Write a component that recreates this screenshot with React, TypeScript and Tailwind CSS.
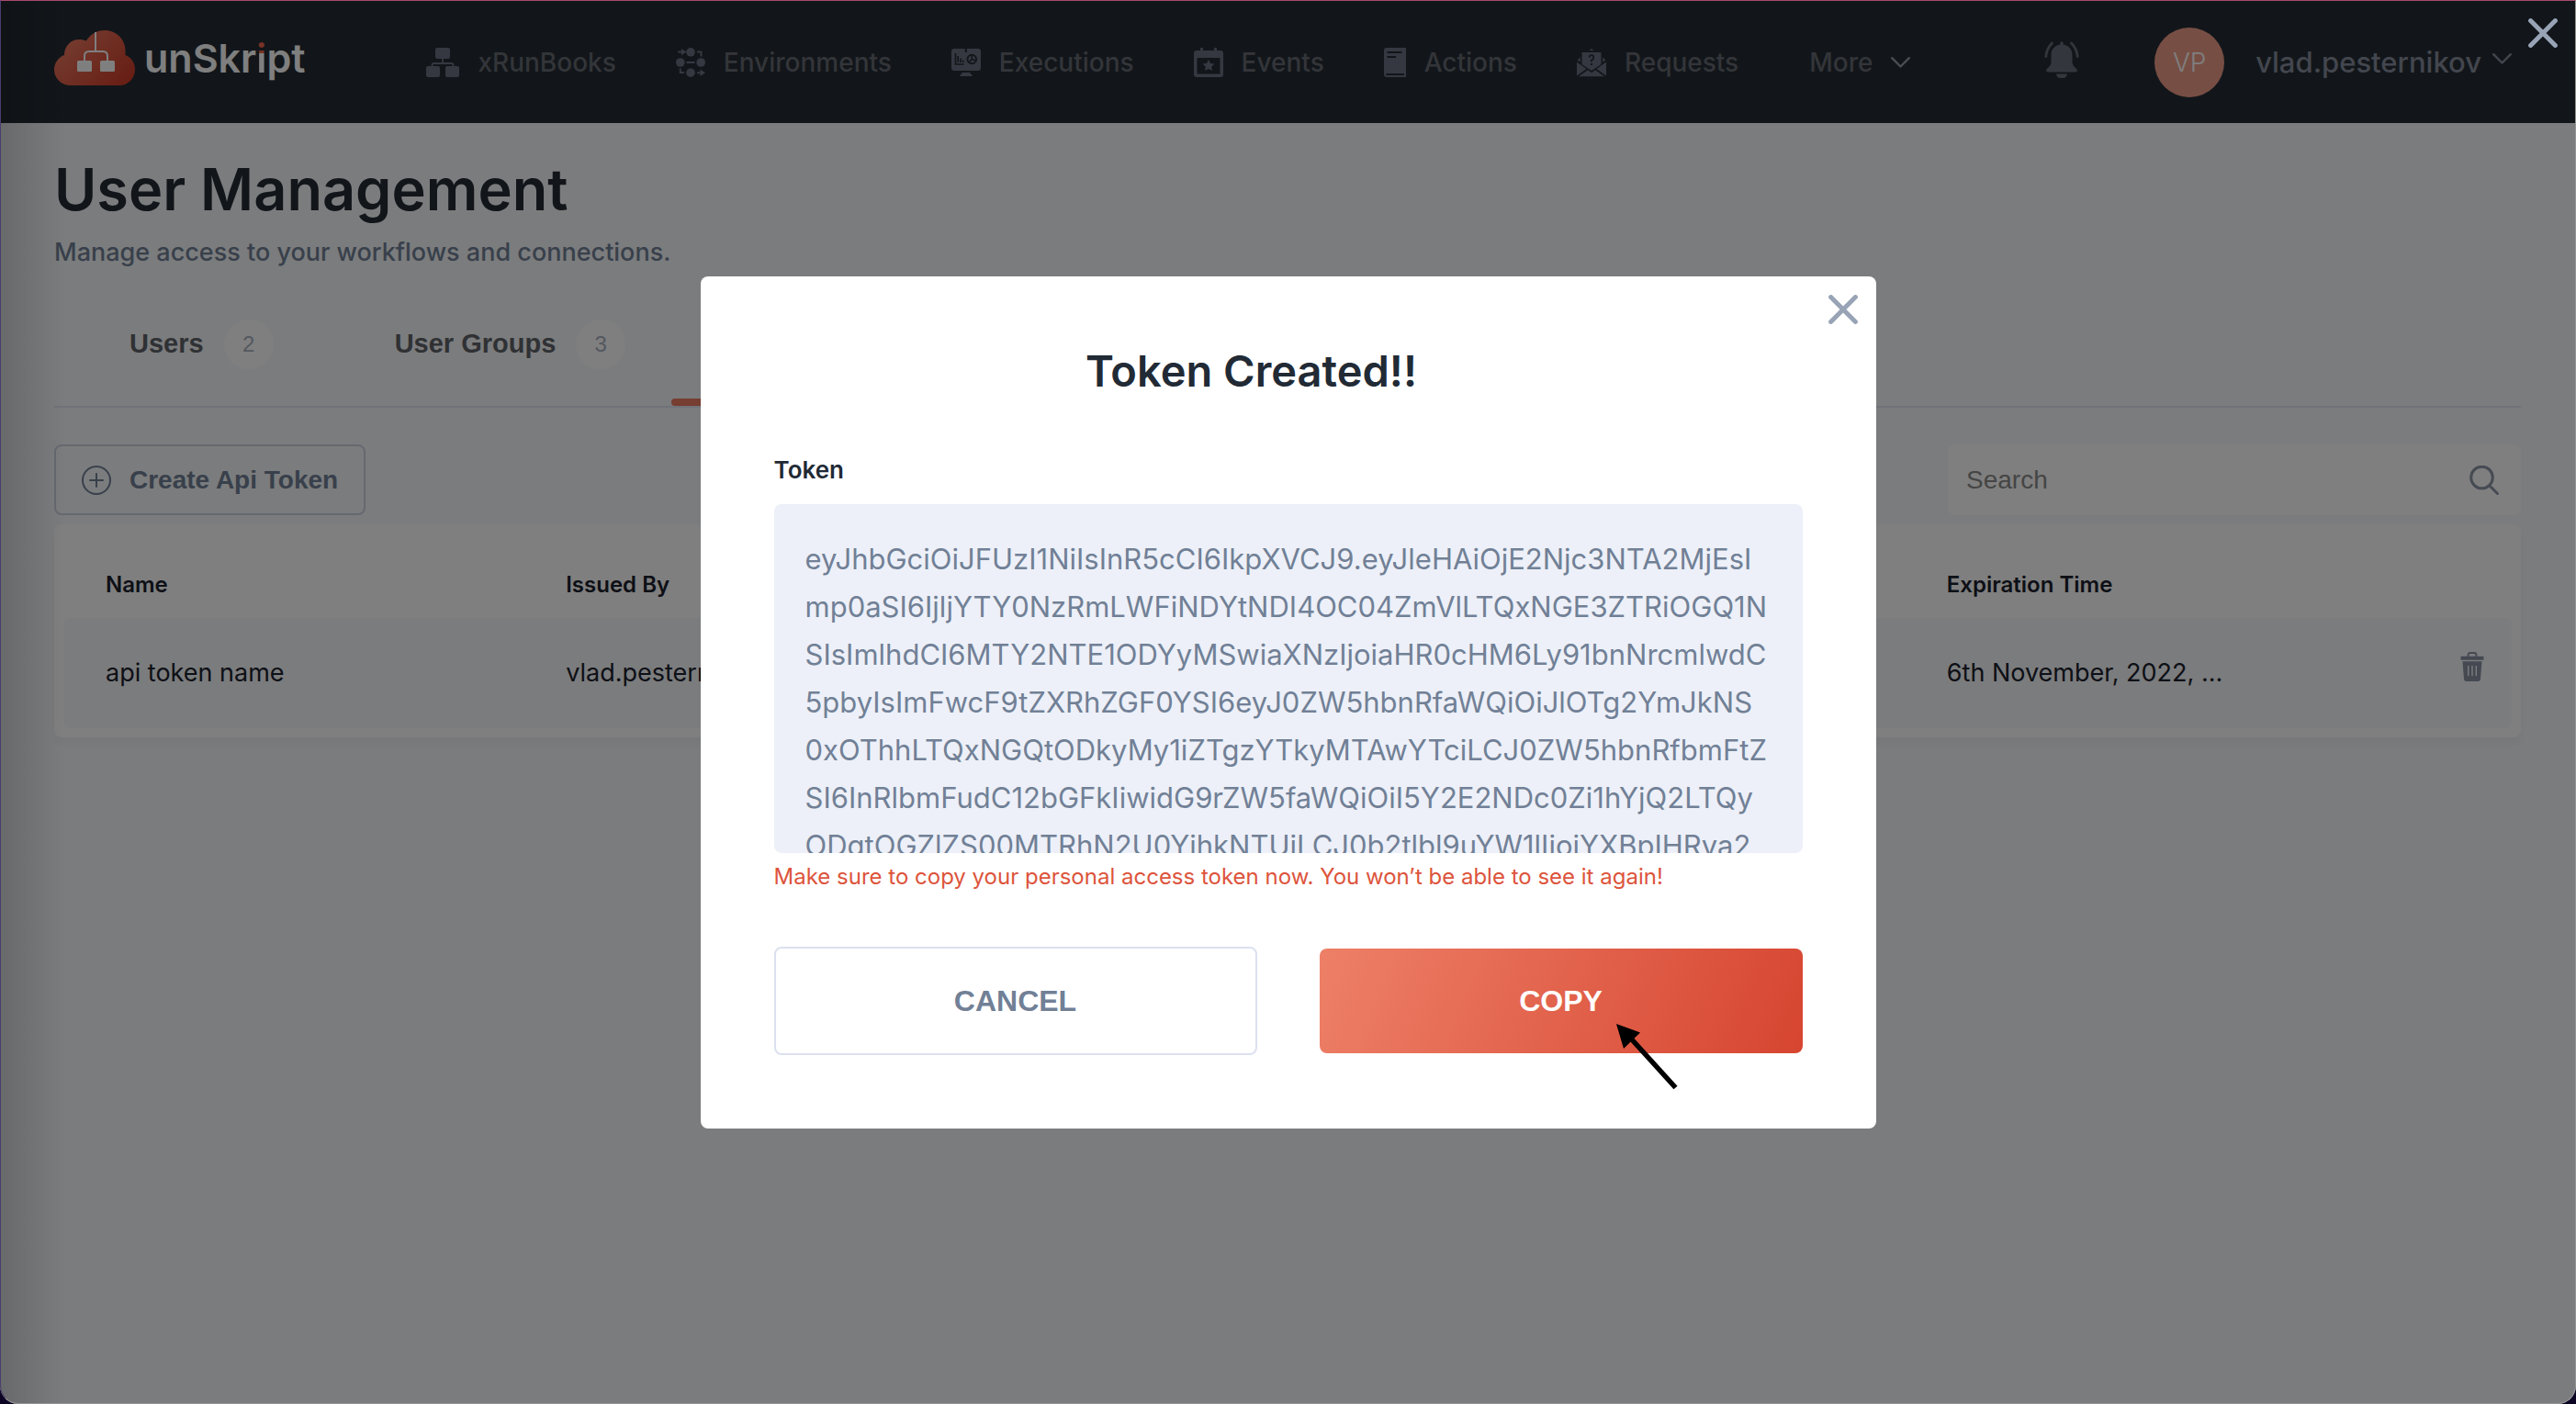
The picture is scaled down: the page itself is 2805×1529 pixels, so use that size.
import React, { useState } from 'react';

const TOKEN = [
  'eyJhbGciOiJFUzI1NiIsInR5cCI6IkpXVCJ9.eyJleHAiOjE2Njc3NTA2MjEsI',
  'mp0aSI6IjljYTY0NzRmLWFiNDYtNDI4OC04ZmVlLTQxNGE3ZTRiOGQ1N',
  'SIsImlhdCI6MTY2NTE1ODYyMSwiaXNzIjoiaHR0cHM6Ly91bnNrcmlwdC',
  '5pbyIsImFwcF9tZXRhZGF0YSI6eyJ0ZW5hbnRfaWQiOiJlOTg2YmJkNS',
  '0xOThhLTQxNGQtODkyMy1iZTgzYTkyMTAwYTciLCJ0ZW5hbnRfbmFtZ',
  'SI6InRlbmFudC12bGFkIiwidG9rZW5faWQiOiI5Y2E2NDc0Zi1hYjQ2LTQy',
  'ODgtOGZlZS00MTRhN2U0YjhkNTUiLCJ0b2tlbl9uYW1lIjoiYXBpIHRva2',
].join('\n');

function LogoMark() {
  return (
    <svg width="88" height="60" viewBox="0 0 88 60" aria-hidden="true">
      <defs>
        <linearGradient id="cloud" x1="0" y1="0.2" x2="1" y2="0.9">
          <stop offset="0" stopColor="#ec7c64" />
          <stop offset="1" stopColor="#cf3a26" />
        </linearGradient>
      </defs>
      <path
        fill="url(#cloud)"
        d="M18 60C8 60 0 52.500 0 43C0 35.500 4.500 29.500 11 27C11 17.500 18 10 27 10C30 10 33 10.600 35 11.500C39 4.500 46.500 0 55 0C67.500 0 77.500 10 77.500 22V27C84 29.500 88 35.500 88 42.500C88 52.500 80.500 60 71 60Z"
      />
      <path d="M45 2V22M33 34V28Q33 23 38 23H53Q58 23 58 28V34" fill="none" stroke="#fff" strokeWidth="2" />
      <rect x="25" y="33" width="16" height="12" rx="1.500" fill="#fff" />
      <rect x="50" y="33" width="16" height="12" rx="1.500" fill="#fff" />
    </svg>
  );
}

function RunBooksIcon() {
  return (
    <svg width="36" height="32" viewBox="0 0 36 32" fill="currentColor" aria-hidden="true">
      <rect x="10" y="0" width="16" height="12" rx="2" />
      <rect x="0" y="20" width="15" height="12" rx="2" />
      <rect x="21" y="20" width="15" height="12" rx="2" />
      <path d="M18 12V17M6.500 21V19Q6.500 17 8.500 17H27.500Q29.500 17 29.500 19V21" fill="none" stroke="currentColor" strokeWidth="1.800" />
    </svg>
  );
}

function EnvironmentsIcon() {
  return (
    <svg width="32" height="32" viewBox="0 0 32 32" fill="currentColor" aria-hidden="true">
      <circle cx="16" cy="4.800" r="4.800" />
      <circle cx="4.800" cy="16" r="4.800" />
      <circle cx="27.200" cy="16" r="4.800" />
      <circle cx="16" cy="27.200" r="4.800" />
      <path d="M11.500 16H20.500M2 4.500H7M23 4.500H27.500V9.500M4.800 22.500V27H9M23 27.200H28" fill="none" stroke="currentColor" strokeWidth="2" />
      <path d="M6 1L11.500 4.600L6 8.200ZM26.500 23.500L32 27.200L26.500 31Z" />
    </svg>
  );
}

function ExecutionsIcon() {
  return (
    <svg width="32" height="32" viewBox="0 0 32 32" fill="currentColor" aria-hidden="true">
      <rect x="0" y="1" width="32" height="24" rx="3" />
      <path d="M11.500 27H20.500L21 29H22.500V31H9.500V29H11Z" />
      <g fill="none" stroke="#252c34" strokeWidth="1.600">
        <path d="M15.800 1V5" strokeWidth="2.200" />
        <path d="M4.500 6V18H13.500M7.200 16V9M10 16V11.500M12.700 16V13.500" />
        <circle cx="22.300" cy="12.500" r="4.800" strokeWidth="1.900" />
        <path d="M22.300 8V12.500L26.500 14M22.300 12.500L19 16" />
      </g>
    </svg>
  );
}

function EventsIcon() {
  return (
    <svg width="32" height="32" viewBox="0 0 32 32" fill="currentColor" aria-hidden="true">
      <path
        fillRule="evenodd"
        d="M3 3H7V1A1.500 1.500 0 0 1 10 1V3H22V1A1.500 1.500 0 0 1 25 1V3H29A3 3 0 0 1 32 6V29A3 3 0 0 1 29 32H3A3 3 0 0 1 0 29V6A3 3 0 0 1 3 3ZM3.500 11V28.500H28.500V11Z"
      />
      <path d="M16 12.800L18 17L22.400 17.600L19.200 20.700L20 25L16 22.900L12 25L12.800 20.700L9.600 17.600L14 17Z" />
    </svg>
  );
}

function ActionsIcon() {
  return (
    <svg width="24" height="32" viewBox="0 0 24 32" fill="currentColor" aria-hidden="true">
      <path d="M3 0H24V32H3A3 3 0 0 1 0 29V3A3 3 0 0 1 3 0Z" />
      <path d="M3.500 5H19.500M3.500 10H13M2.500 29H22" stroke="#252c34" strokeWidth="1.800" />
    </svg>
  );
}

function RequestsIcon() {
  return (
    <svg width="32" height="32" viewBox="0 0 32 32" fill="currentColor" aria-hidden="true">
      <path d="M13.500 3L16 1L18.500 3Z" />
      <path d="M5.500 5H26.500V18L16 25L5.500 18Z" />
      <path d="M3.800 10.500V15.500L0.500 13.500ZM28.200 10.500V15.500L31.500 13.500Z" />
      <path d="M0 15.500L10.500 23L0 30.500ZM32 15.500L21.500 23L32 30.500ZM12 24.300L16 27.300L20 24.300L30 31.200H2Z" />
      <path d="M13.800 10.500Q13.800 8.200 16 8.200Q18.300 8.200 18.300 10.500Q18.300 12.500 16 13.500V15.500M16 17V19" fill="none" stroke="#252c34" strokeWidth="1.800" />
    </svg>
  );
}

function BellIcon() {
  return (
    <svg width="38" height="40" viewBox="0 0 38 40" fill="currentColor" aria-hidden="true">
      <path d="M17.300 2A1.700 1.700 0 0 1 20.700 2V3.500C27 4.500 30.500 9 30.500 15V22C30.500 26 33 28 35.500 30.500C36.500 32 35.500 33.500 34 33.500H4C2.500 33.500 1.500 32 2.500 30.500C5 28 7.500 26 7.500 22V15C7.500 9 11 4.500 17.300 3.500Z" />
      <path d="M13 35.500H25A6 5 0 0 1 13 35.500Z" />
      <path d="M8.500 2Q2.500 8 1.800 16.500M29.500 2Q35.500 8 36.200 16.500" fill="none" stroke="currentColor" strokeWidth="2.800" strokeLinecap="round" />
    </svg>
  );
}

function Chevron() {
  return (
    <svg width="21" height="12" viewBox="0 0 21 12" fill="none" aria-hidden="true">
      <path d="M1.200 1.200L10.500 10.500L19.800 1.200" stroke="currentColor" strokeWidth="2.400" strokeLinecap="round" strokeLinejoin="round" />
    </svg>
  );
}

function CloseIcon() {
  return (
    <svg width="32" height="32" viewBox="0 0 32 32" fill="none" aria-hidden="true">
      <path d="M2.600 2.600L29.400 29.400M29.400 2.600L2.600 29.400" stroke="#98a4b6" strokeWidth="5" strokeLinecap="round" />
    </svg>
  );
}

function PlusCircleIcon() {
  return (
    <svg width="32" height="32" viewBox="0 0 32 32" fill="none" stroke="#718096" strokeWidth="2" strokeLinecap="round" aria-hidden="true">
      <circle cx="16" cy="16" r="15" />
      <path d="M16 9V23M9 16H23" />
    </svg>
  );
}

function SearchIcon() {
  return (
    <svg width="32" height="32" viewBox="0 0 32 32" fill="none" stroke="#8d96a6" strokeWidth="3" strokeLinecap="round" aria-hidden="true">
      <circle cx="13.500" cy="13" r="11.800" />
      <path d="M22 22L30.500 30.500" />
    </svg>
  );
}

function TrashIcon() {
  return (
    <svg width="26" height="32" viewBox="0 0 26 32" aria-hidden="true">
      <path d="M8.500 5V3.500Q8.500 1 11 1H15Q17.500 1 17.500 3.500V5" fill="none" stroke="#8893a4" strokeWidth="1.900" />
      <rect x="0.500" y="4.800" width="25" height="4" rx="0.800" fill="#8893a4" />
      <path d="M2.500 10.200H23.500L22 29.500Q21.800 32 19.500 32H6.500Q4.200 32 4 29.500Z" fill="#8893a4" />
      <path d="M8.700 15V26M13 15V26M17.300 15V26" stroke="#f6f8fb" strokeWidth="1.400" />
    </svg>
  );
}

const NAV = [
  { label: 'xRunBooks', Icon: RunBooksIcon },
  { label: 'Environments', Icon: EnvironmentsIcon },
  { label: 'Executions', Icon: ExecutionsIcon },
  { label: 'Events', Icon: EventsIcon },
  { label: 'Actions', Icon: ActionsIcon },
  { label: 'Requests', Icon: RequestsIcon },
];

function Header() {
  return (
    <header className="flex h-[134px] items-center bg-[#242c34] pt-[2px] pr-[70px] pl-[59px]">
      <a href="#home" className="mb-[10px] flex items-center gap-[10px] text-[43px] leading-[52px] font-semibold text-white">
        <LogoMark />
        <span>
          unSkr
          <span className="inline-block bg-linear-to-b from-[#f0654a] from-40% to-white to-40% bg-clip-text text-transparent">i</span>
          pt
        </span>
      </a>
      <nav className="ml-[132px] flex items-center gap-[65px] text-[28px] font-medium text-[#666a73]">
        {NAV.map(({ label, Icon }) => (
          <a key={label} href={'#' + label.toLowerCase()} className="flex items-center gap-5">
            <span className="text-[#6a7080]">
              <Icon />
            </span>
            {label}
          </a>
        ))}
        <button type="button" className="ml-3 flex items-center gap-5">
          More
          <span className="text-[#969aa2]">
            <Chevron />
          </span>
        </button>
      </nav>
      <button type="button" aria-label="Notifications" className="mb-[6px] ml-auto text-[#666c78]">
        <BellIcon />
      </button>
      <button type="button" className="ml-[82px] flex items-center text-[31px] font-medium text-[#868c9c]">
        <span className="mr-[34px] flex size-[76px] items-center justify-center rounded-full bg-[#ee9c88] text-[28px] font-light text-white">
          VP
        </span>
        vlad.pesternikov
        <span className="mb-2 ml-3">
          <Chevron />
        </span>
      </button>
    </header>
  );
}

function Tab({ label, count, active }: { label: string; count: number; active?: boolean }) {
  return (
    <button type="button" role="tab" aria-selected={!!active} className="flex flex-col">
      <span className="flex items-center gap-[22px] pr-[50px] pb-8 pl-[82px] text-[29px] font-bold text-[#5f6368]">
        {label}
        <span className="flex size-[54px] items-center justify-center rounded-full bg-white text-[24px] font-normal text-[#a9b1bf]">
          {count}
        </span>
      </span>
      <span className={active ? 'h-2 w-full rounded-sm bg-[#ed7b62]' : 'h-2 w-full'} />
    </button>
  );
}

const HEAD = 'h-[102px] pt-[30px] pl-[46px] text-left text-[24px] font-semibold';
const CELL = 'h-[120px] truncate bg-[#f6f8fb] pl-[46px]';

function TokenTable() {
  return (
    <div className="mt-[10px] rounded-lg bg-white px-[10px] pb-[10px] text-[#1a202c] shadow-[0_8px_6px_rgba(0,0,0,0.03)]">
      <table className="w-full table-fixed border-separate border-spacing-0 text-[27px]">
        <thead>
          <tr>
            <th className={HEAD + ' w-[18.8%]'}>Name</th>
            <th className={HEAD + ' w-[18.8%]'}>Issued By</th>
            <td className="w-[18.8%]" />
            <td className="w-[18.8%]" />
            <th className={HEAD + ' w-[18.8%]'}>Expiration Time</th>
            <td />
          </tr>
        </thead>
        <tbody>
          <tr>
            <td className={CELL + ' rounded-l-lg'}>api token name</td>
            <td className={CELL}>vlad.pesternikov</td>
            <td className={CELL} />
            <td className={CELL} />
            <td className={CELL}>6th November, 2022, ...</td>
            <td className="rounded-r-lg bg-[#f6f8fb] pr-[30px] pb-4 text-right">
              <button type="button" aria-label="Delete token" className="inline-block align-middle">
                <TrashIcon />
              </button>
            </td>
          </tr>
        </tbody>
      </table>
    </div>
  );
}

function TokenDialog() {
  const [token, setToken] = useState(TOKEN);
  return (
    <section
      role="dialog"
      aria-modal="true"
      aria-labelledby="dialog-title"
      className="relative w-[1280px] max-w-full rounded-lg bg-white px-20 pt-[75px] pb-20"
    >
      <button type="button" aria-label="Close dialog" className="absolute top-5 right-5">
        <CloseIcon />
      </button>
      <h2 id="dialog-title" className="pr-20 text-center text-[47px] leading-[56px] font-semibold text-[#212a35]">
        Token Created!!
      </h2>
      <label htmlFor="token" className="mt-16 block text-[26px] leading-8 font-semibold text-[#212a35]">
        Token
      </label>
      <textarea
        id="token"
        wrap="off"
        spellCheck={false}
        value={token}
        onChange={(e) => setToken(e.target.value)}
        className="mt-[21px] block h-[380px] w-full resize-none overflow-hidden rounded-lg bg-[#edf0f8] p-[34px] text-[31px] leading-[52px] text-[#718096] outline-none"
      />
      <p className="mt-[10px] text-[24px] leading-8 font-normal text-[#dd543c]">
        Make sure to copy your personal access token now. You won’t be able to see it again!
      </p>
      <div className="mt-[60px] grid grid-cols-2 gap-[68px] font-['Liberation_Sans',sans-serif] text-[32px] font-bold">
        <button type="button" className="h-[118px] rounded-lg border-2 border-[#dce1ef] text-[#718096]">
          CANCEL
        </button>
        <div className="relative py-[2px]">
          <button
            type="button"
            className="h-[114px] w-full rounded-lg bg-linear-[112deg] from-[#ee8068] to-[#d64530] text-white"
          >
            COPY
          </button>
          <svg className="pointer-events-none absolute top-[69px] right-[122px]" width="100" height="100" viewBox="0 0 100 100" aria-hidden="true">
            <path d="M19 15L45 24.500L27 42Z" />
            <path d="M35 31L83.500 84.500" stroke="#000" strokeWidth="5.500" />
          </svg>
        </div>
      </div>
    </section>
  );
}

export default function App() {
  return (
    <div className="min-h-screen bg-[#0c0524] font-['Inter',sans-serif]">
      <div className="relative min-h-screen overflow-hidden rounded-b-[20px] bg-[#f6f8fb]">
        <Header />
        <main className="pt-[34px] pr-[60px] pl-[59px]">
          <h1 className="text-[63px] leading-[76px] font-semibold text-[#242b35]">User Management</h1>
          <p className="mt-[14px] text-[27px] leading-[34px] font-medium text-[#718096]">
            Manage access to your workflows and connections.
          </p>
          <div role="tablist" className="mt-14 flex border-b-2 border-[#e2e6f2] font-['Liberation_Sans',sans-serif]">
            <Tab label="Users" count={2} />
            <Tab label="User Groups" count={3} />
            <Tab label="Api Tokens" count={1} active />
          </div>
          <div className="mt-10 flex items-center justify-between font-['Liberation_Sans',sans-serif] text-[28px]">
            <button
              type="button"
              className="flex h-[77px] items-center gap-5 rounded-lg border-2 border-[#cbd2e0] px-7 font-bold text-[#718096]"
            >
              <PlusCircleIcon />
              Create Api Token
            </button>
            <div className="flex h-[77px] w-[624px] items-center rounded-lg bg-white pr-6 pl-5">
              <input
                type="search"
                aria-label="Search"
                placeholder="Search"
                className="min-w-0 flex-1 bg-transparent outline-none placeholder:text-[#8a8a8a]"
              />
              <SearchIcon />
            </div>
          </div>
          <TokenTable />
        </main>
        <div className="pointer-events-none absolute inset-y-0 left-0 w-[70px] bg-linear-to-r from-black/15 to-transparent" />
        <div className="absolute inset-0 flex items-center justify-center bg-black/50">
          <button type="button" aria-label="Close" className="absolute top-5 right-5">
            <CloseIcon />
          </button>
          <TokenDialog />
        </div>
        <div className="pointer-events-none absolute inset-0 rounded-b-[20px] border border-t-[#a94a6c] border-r-[#959595] border-b-[#959595] border-l-[#4a3d6e]" />
      </div>
    </div>
  );
}
